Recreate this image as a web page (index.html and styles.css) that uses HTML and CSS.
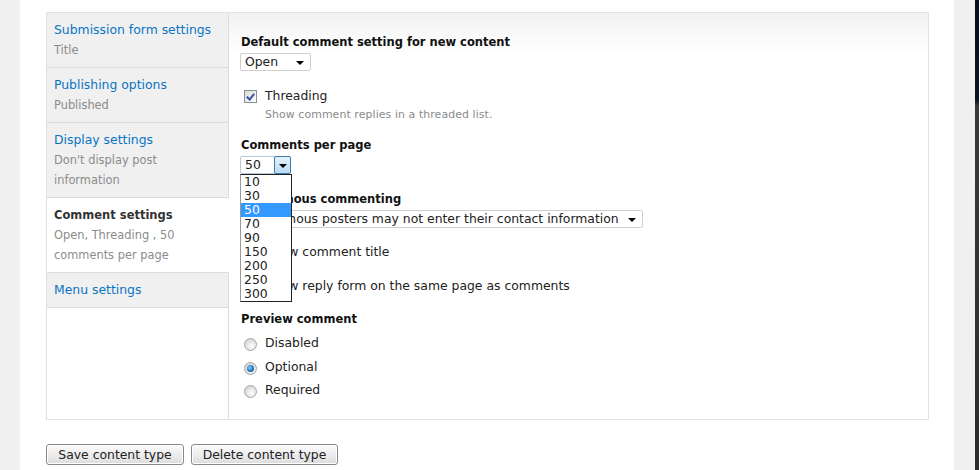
FILE: index.html
```html
<!DOCTYPE html>
<html lang="en">
<head>
<meta charset="utf-8">
<title>Comment settings</title>
<link rel="stylesheet" href="styles.css">
</head>
<body>
<div class="page">
  <div class="gutter"></div>
  <main class="main">
    <div class="vtabs">
      <ul class="tablist">
        <li class="tab"><a class="tab-title" href="#">Submission form settings</a><span class="tab-summary">Title</span></li>
        <li class="tab"><a class="tab-title" href="#">Publishing options</a><span class="tab-summary">Published</span></li>
        <li class="tab"><a class="tab-title" href="#">Display settings</a><span class="tab-summary">Don't display post information</span></li>
        <li class="tab selected"><a class="tab-title" href="#">Comment settings</a><span class="tab-summary">Open, Threading , 50 comments per page</span></li>
        <li class="tab"><a class="tab-title" href="#">Menu settings</a></li>
      </ul>
      <div class="panel">
        <div class="item">
          <div class="label">Default comment setting for new content</div>
          <div class="select w-open"><span class="select-text">Open</span><span class="arrow"></span></div>
        </div>
        <div class="item check-item">
          <div class="check-row"><span class="checkbox checked"></span><span class="check-label">Threading</span></div>
          <div class="desc">Show comment replies in a threaded list.</div>
        </div>
        <div class="item">
          <div class="label">Comments per page</div>
          <div class="select-wrap">
            <div class="select focused w-per"><span class="select-text">50</span><span class="arrow-btn"><span class="arrow"></span></span></div>
            <ul class="dropdown">
              <li>10</li><li>30</li><li class="hl">50</li><li>70</li><li>90</li><li>150</li><li>200</li><li>250</li><li>300</li>
            </ul>
          </div>
        </div>
        <div class="item tight">
          <div class="label">Anonymous commenting</div>
          <div class="select w-anon"><span class="select-text">Anonymous posters may not enter their contact information</span><span class="arrow"></span></div>
        </div>
        <div class="item">
          <div class="check-row"><span class="checkbox"></span><span class="check-label">Show comment title</span></div>
        </div>
        <div class="item tight">
          <div class="check-row"><span class="checkbox"></span><span class="check-label">Show reply form on the same page as comments</span></div>
        </div>
        <div class="item last">
          <div class="label">Preview comment</div>
          <div class="radios">
            <div class="check-row"><span class="radio"></span><span class="check-label">Disabled</span></div>
            <div class="check-row"><span class="radio on"></span><span class="check-label">Optional</span></div>
            <div class="check-row"><span class="radio"></span><span class="check-label">Required</span></div>
          </div>
        </div>
      </div>
    </div>
    <div class="actions">
      <button class="btn w-save">Save content type</button>
      <button class="btn w-del">Delete content type</button>
    </div>
  </main>
  <div class="gutter right"></div>
  <div class="edge"></div>
</div>
</body>
</html>
```

FILE: styles.css
```css
html, body {
  margin: 0;
  padding: 0;
  height: 100%;
  overflow: hidden;
}
body {
  font-family: "DejaVu Sans", Verdana, sans-serif;
  font-size: 12.4px;
  color: #222;
  background: #fff;
}
.page {
  display: flex;
  height: 470px;
}
.gutter {
  width: 20px;
  background: #f0f0f0;
  flex: none;
}
.gutter.right {
  width: 21px;
}
.edge {
  width: 4px;
  flex: none;
  background: linear-gradient(#07111d 0, #0a1422 100px, #3a3a3a 106px, #2c2c2c 100%);
}
.main {
  flex: 1;
  background: #fff;
  padding: 12px 25px 0 26px;
}
.vtabs {
  display: flex;
  border: 1px solid #e2e2e2;
  border-left-color: #e0e0e0;
}
.tablist {
  list-style: none;
  margin: 0;
  padding: 0;
  width: 181px;
  flex: none;
  border-right: 1px solid #dcdcdc;
}
.tab {
  background: #f0f0f0;
  border-bottom: 1px solid #dcdcdc;
  margin-right: -1px;
  border-right: 1px solid #dcdcdc;
  padding: 7px 8px 7px 7px;
  line-height: 20px;
}
.tab.selected {
  background: #fff;
  border-right-color: #fff;
}
.tab-title {
  display: block;
  color: #0a74c4;
  text-decoration: none;
  font-size: 12.4px;
}
.tab.selected .tab-title {
  color: #333;
  font-weight: bold;
  font-size: 11.5px;
}
.tab-summary {
  display: block;
  color: #8c8c8c;
  font-size: 11.4px;
}
.panel {
  flex: 1;
  background: linear-gradient(#f1f1f1 0, #fafafa 25px, #fff 42px);
  padding: 20px 12px 20px 12px;
}
.item {
  margin-bottom: 16px;
}
.item.tight {
  margin-bottom: 15px;
}
.item.last {
  margin-bottom: 0;
}
.label {
  font-weight: bold;
  color: #111;
  line-height: 18px;
  font-size: 11.5px;
  margin-bottom: 2px;
}
.select {
  box-sizing: border-box;
  height: 18px;
  border: 1px solid #cfcfcf;
  border-radius: 2px;
  background: #fff;
  display: flex;
  align-items: center;
  padding-left: 4px;
  line-height: 16px;
  color: #222;
  margin-left: -1px;
}
.select-text {
  flex: 1;
  white-space: nowrap;
}
.arrow {
  display: block;
  width: 0;
  height: 0;
  border-left: 4px solid transparent;
  border-right: 4px solid transparent;
  border-top: 4px solid #000;
  margin: 2px 6px 0 4px;
}
.w-open { width: 71px; }
.w-per { width: 51px; }
.w-anon { width: 403px; }
.select-wrap {
  position: relative;
}
.select.focused {
  border-color: #b7c8d8;
  padding-right: 0;
}
.arrow-btn {
  box-sizing: border-box;
  width: 17px;
  height: 18px;
  margin: -1px -1px -1px 0;
  border: 1px solid #3d7bad;
  border-radius: 2px;
  background: linear-gradient(#e3f1fd, #b9dcf7);
  display: flex;
  align-items: center;
  justify-content: center;
}
.arrow-btn .arrow {
  margin: 1px 0 0 0;
}
.dropdown {
  position: absolute;
  left: -1px;
  top: 18px;
  z-index: 5;
  margin: 0;
  padding: 0;
  list-style: none;
  width: 52px;
  box-sizing: border-box;
  background: #fff;
  border: 1px solid #222;
  border-left-color: #999;
}
.dropdown li {
  line-height: 14px;
  height: 14px;
  padding-left: 3px;
  font-size: 12.4px;
  color: #222;
}
.dropdown li.hl {
  background: #3399ff;
  color: #fff;
}
.check-item {
  margin-top: 14px;
  margin-bottom: 12px;
}
.check-row {
  display: flex;
  align-items: center;
  height: 18px;
  padding-left: 3px;
}
.check-label {
  margin-left: 8px;
  line-height: 18px;
}
.checkbox {
  box-sizing: border-box;
  width: 13px;
  height: 13px;
  border: 1px solid #8c8f94;
  background: linear-gradient(135deg, #dcdcd6, #fcfcfb);
  position: relative;
  flex: none;
}
.checkbox.checked::after {
  content: "";
  position: absolute;
  left: 3px;
  top: 1px;
  width: 3px;
  height: 6px;
  border-right: 2px solid #3a53a8;
  border-bottom: 2px solid #3a53a8;
  transform: rotate(40deg);
}
.desc {
  font-size: 10.9px;
  color: #8a8a8a;
  line-height: 18px;
  margin-top: 1px;
  padding-left: 24px;
  letter-spacing: 0.1px;
}
.radios .check-row {
  margin-top: 6px;
}
.radios .check-row:last-child {
  margin-top: 5px;
}
.radio {
  box-sizing: border-box;
  width: 13px;
  height: 13px;
  border-radius: 50%;
  border: 1px solid #a5a5a5;
  background: radial-gradient(circle at 60% 65%, #ffffff 0, #e6e6e6 45%, #c8c8c8 100%);
  flex: none;
  margin-top: 3px;
  position: relative;
}
.radio.on::after {
  content: "";
  position: absolute;
  left: 2px;
  top: 2px;
  width: 7px;
  height: 7px;
  border-radius: 50%;
  background: radial-gradient(circle at 40% 40%, #8fd0ff 0, #1f77c0 55%, #0d4a84 100%);
}
.actions {
  margin-top: 24px;
  display: flex;
  gap: 7px;
}
.btn {
  font-family: "DejaVu Sans", Verdana, sans-serif;
  font-size: 12.4px;
  color: #222;
  height: 21px;
  padding: 0 8px;
  border: 1px solid #8a8a8a;
  border-radius: 3px;
  background: linear-gradient(#fbfbfb, #ededed 50%, #dcdcdc);
  box-shadow: inset 0 0 0 1px #fff;
  line-height: 18px;
}
.w-save { width: 138px; }
.w-del { width: 147px; }
```
